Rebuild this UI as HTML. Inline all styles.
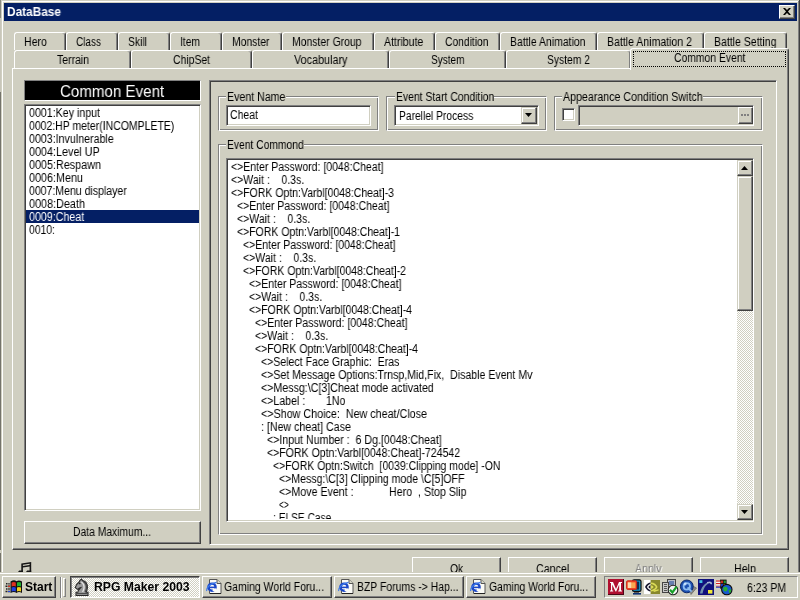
<!DOCTYPE html>
<html><head><meta charset="utf-8"><title>DataBase</title>
<style>
*{box-sizing:border-box;margin:0;padding:0}
html,body{width:800px;height:600px;overflow:hidden;background:#d0cfc1;font-family:"Liberation Sans",sans-serif;font-size:12px;color:#000}
.a{position:absolute}
.t{position:absolute;white-space:pre;transform-origin:0 0;will-change:transform}
svg{position:absolute;overflow:visible}
</style></head><body>
<div class="a" style="left:0px;top:0px;width:800px;height:600px;background:#d0cfc1"></div>
<div class="a" style="left:0px;top:0px;width:1px;height:18px;background:#8a8a80"></div>
<div class="a" style="left:0px;top:18px;width:1px;height:74px;background:#c8c6ba"></div>
<div class="a" style="left:0px;top:92px;width:1px;height:458px;background:#74736b"></div>
<div class="a" style="left:0px;top:553px;width:1px;height:19px;background:#74736b"></div>
<div class="a" style="left:2px;top:1px;width:796px;height:1px;background:#ffffff"></div>
<div class="a" style="left:2px;top:1px;width:1px;height:571px;background:#ffffff"></div>
<div class="a" style="left:798px;top:1px;width:1px;height:571px;background:#808080"></div>
<div class="a" style="left:799px;top:0px;width:1px;height:572px;background:#404040"></div>
<div class="a" style="left:4px;top:3px;width:793px;height:18px;background:#041f64"></div>
<span class="t" style="left:7px;top:4.84px;font-size:12px;line-height:14px;color:#fff;font-weight:bold;transform:scaleX(0.9871);">DataBase</span>
<div class="a" style="left:779px;top:5px;width:16px;height:14px;background:#d0cfc1;border:1px solid;border-color:#ffffff #404040 #404040 #ffffff;box-shadow:inset -1px -1px 0 #808080"></div>
<svg style="left:783px;top:8px" width="8" height="7" viewBox="0 0 8 7"><path d="M0 0h2l2 2 2-2h2L5 3.5 8 7H6L4 5 2 7H0l3-3.5z" fill="#000"/></svg>
<div class="a" style="left:14px;top:32px;width:52px;height:18px;background:#d0cfc1;border-radius:3px 3px 0 0;border:1px solid;border-color:#ffffff #404040 #d0cfc1 #ffffff;border-bottom:none;box-shadow:inset -1px 0 0 #808080"></div>
<span class="t" style="left:24.2px;top:34.84px;font-size:12px;line-height:14px;color:#000;transform:scaleX(0.8841);">Hero</span>
<div class="a" style="left:66px;top:32px;width:52px;height:18px;background:#d0cfc1;border-radius:3px 3px 0 0;border:1px solid;border-color:#ffffff #404040 #d0cfc1 #ffffff;border-bottom:none;box-shadow:inset -1px 0 0 #808080"></div>
<span class="t" style="left:76.2px;top:34.84px;font-size:12px;line-height:14px;color:#000;transform:scaleX(0.8329);">Class</span>
<div class="a" style="left:118px;top:32px;width:52px;height:18px;background:#d0cfc1;border-radius:3px 3px 0 0;border:1px solid;border-color:#ffffff #404040 #d0cfc1 #ffffff;border-bottom:none;box-shadow:inset -1px 0 0 #808080"></div>
<span class="t" style="left:128.2px;top:34.84px;font-size:12px;line-height:14px;color:#000;transform:scaleX(0.8630);">Skill</span>
<div class="a" style="left:170px;top:32px;width:52px;height:18px;background:#d0cfc1;border-radius:3px 3px 0 0;border:1px solid;border-color:#ffffff #404040 #d0cfc1 #ffffff;border-bottom:none;box-shadow:inset -1px 0 0 #808080"></div>
<span class="t" style="left:180.2px;top:34.84px;font-size:12px;line-height:14px;color:#000;transform:scaleX(0.8568);">Item</span>
<div class="a" style="left:222px;top:32px;width:60px;height:18px;background:#d0cfc1;border-radius:3px 3px 0 0;border:1px solid;border-color:#ffffff #404040 #d0cfc1 #ffffff;border-bottom:none;box-shadow:inset -1px 0 0 #808080"></div>
<span class="t" style="left:232.2px;top:34.84px;font-size:12px;line-height:14px;color:#000;transform:scaleX(0.8649);">Monster</span>
<div class="a" style="left:282px;top:32px;width:92px;height:18px;background:#d0cfc1;border-radius:3px 3px 0 0;border:1px solid;border-color:#ffffff #404040 #d0cfc1 #ffffff;border-bottom:none;box-shadow:inset -1px 0 0 #808080"></div>
<span class="t" style="left:292.2px;top:34.84px;font-size:12px;line-height:14px;color:#000;transform:scaleX(0.8682);">Monster Group</span>
<div class="a" style="left:374px;top:32px;width:61px;height:18px;background:#d0cfc1;border-radius:3px 3px 0 0;border:1px solid;border-color:#ffffff #404040 #d0cfc1 #ffffff;border-bottom:none;box-shadow:inset -1px 0 0 #808080"></div>
<span class="t" style="left:384.2px;top:34.84px;font-size:12px;line-height:14px;color:#000;transform:scaleX(0.8780);">Attribute</span>
<div class="a" style="left:435px;top:32px;width:65px;height:18px;background:#d0cfc1;border-radius:3px 3px 0 0;border:1px solid;border-color:#ffffff #404040 #d0cfc1 #ffffff;border-bottom:none;box-shadow:inset -1px 0 0 #808080"></div>
<span class="t" style="left:445.2px;top:34.84px;font-size:12px;line-height:14px;color:#000;transform:scaleX(0.8579);">Condition</span>
<div class="a" style="left:500px;top:32px;width:97px;height:18px;background:#d0cfc1;border-radius:3px 3px 0 0;border:1px solid;border-color:#ffffff #404040 #d0cfc1 #ffffff;border-bottom:none;box-shadow:inset -1px 0 0 #808080"></div>
<span class="t" style="left:510.2px;top:34.84px;font-size:12px;line-height:14px;color:#000;transform:scaleX(0.8706);">Battle Animation</span>
<div class="a" style="left:597px;top:32px;width:107px;height:18px;background:#d0cfc1;border-radius:3px 3px 0 0;border:1px solid;border-color:#ffffff #404040 #d0cfc1 #ffffff;border-bottom:none;box-shadow:inset -1px 0 0 #808080"></div>
<span class="t" style="left:607.2px;top:34.84px;font-size:12px;line-height:14px;color:#000;transform:scaleX(0.8787);">Battle Animation 2</span>
<div class="a" style="left:704px;top:32px;width:83px;height:18px;background:#d0cfc1;border-radius:3px 3px 0 0;border:1px solid;border-color:#ffffff #404040 #d0cfc1 #ffffff;border-bottom:none;box-shadow:inset -1px 0 0 #808080"></div>
<span class="t" style="left:714.2px;top:34.84px;font-size:12px;line-height:14px;color:#000;transform:scaleX(0.8755);">Battle Setting</span>
<div class="a" style="left:14px;top:50px;width:117px;height:18px;background:#d0cfc1;border-radius:3px 3px 0 0;border:1px solid;border-color:#ffffff #404040 #d0cfc1 #ffffff;border-bottom:none;box-shadow:inset -1px 0 0 #808080"></div>
<span class="t" style="left:56.5px;top:52.84px;font-size:12px;line-height:14px;color:#000;transform:scaleX(0.8722);">Terrain</span>
<div class="a" style="left:131px;top:50px;width:121px;height:18px;background:#d0cfc1;border-radius:3px 3px 0 0;border:1px solid;border-color:#ffffff #404040 #d0cfc1 #ffffff;border-bottom:none;box-shadow:inset -1px 0 0 #808080"></div>
<span class="t" style="left:173.0px;top:52.84px;font-size:12px;line-height:14px;color:#000;transform:scaleX(0.8664);">ChipSet</span>
<div class="a" style="left:252px;top:50px;width:137px;height:18px;background:#d0cfc1;border-radius:3px 3px 0 0;border:1px solid;border-color:#ffffff #404040 #d0cfc1 #ffffff;border-bottom:none;box-shadow:inset -1px 0 0 #808080"></div>
<span class="t" style="left:293.75px;top:52.84px;font-size:12px;line-height:14px;color:#000;transform:scaleX(0.9011);">Vocabulary</span>
<div class="a" style="left:389px;top:50px;width:117px;height:18px;background:#d0cfc1;border-radius:3px 3px 0 0;border:1px solid;border-color:#ffffff #404040 #d0cfc1 #ffffff;border-bottom:none;box-shadow:inset -1px 0 0 #808080"></div>
<span class="t" style="left:430.75px;top:52.84px;font-size:12px;line-height:14px;color:#000;transform:scaleX(0.8372);">System</span>
<div class="a" style="left:506px;top:50px;width:125px;height:18px;background:#d0cfc1;border-radius:3px 3px 0 0;border:1px solid;border-color:#ffffff #404040 #d0cfc1 #ffffff;border-bottom:none;box-shadow:inset -1px 0 0 #808080"></div>
<span class="t" style="left:547.0px;top:52.84px;font-size:12px;line-height:14px;color:#000;transform:scaleX(0.8597);">System 2</span>
<div class="a" style="left:12px;top:68px;width:777px;height:482px;background:#d0cfc1;border:1px solid;border-color:#ffffff #404040 #404040 #ffffff;box-shadow:inset -1px -1px 0 #808080"></div>
<div class="a" style="left:630px;top:48px;width:159px;height:22px;background:#d0cfc1;border-radius:3px 3px 0 0;border:1px solid;border-color:#ffffff #404040 #d0cfc1 #ffffff;border-bottom:none;box-shadow:inset -1px 0 0 #808080"></div>
<div class="a" style="left:633px;top:51px;width:153px;height:16px;border:1px dotted #000"></div>
<span class="t" style="left:673.75px;top:50.84px;font-size:12px;line-height:14px;color:#000;transform:scaleX(0.8645);">Common Event</span>
<div class="a" style="left:24px;top:80px;width:177px;height:21px;background:#000;border:1px solid;border-color:#808080 #fff #fff #808080"></div>
<span class="t" style="left:59.6px;top:81.76px;font-size:16px;line-height:19px;color:#fff;transform:scaleX(0.9450);">Common Event</span>
<div class="a" style="left:24px;top:104px;width:177px;height:407px;background:#fff;border:1px solid;border-color:#808080 #ffffff #ffffff #808080;box-shadow:inset 1px 1px 0 #404040, inset -1px -1px 0 #d0cfc1"></div>
<div class="a" style="left:26px;top:210px;width:173px;height:13px;background:#041f64"></div>
<span class="t" style="left:28.5px;top:105.84px;font-size:12px;line-height:14px;color:#000;transform:scaleX(0.8868);">0001:Key input</span>
<span class="t" style="left:28.5px;top:118.84px;font-size:12px;line-height:14px;color:#000;transform:scaleX(0.8724);">0002:HP meter(INCOMPLETE)</span>
<span class="t" style="left:28.5px;top:131.84px;font-size:12px;line-height:14px;color:#000;transform:scaleX(0.8882);">0003:Invulnerable</span>
<span class="t" style="left:28.5px;top:144.84px;font-size:12px;line-height:14px;color:#000;transform:scaleX(0.8986);">0004:Level UP</span>
<span class="t" style="left:28.5px;top:157.84px;font-size:12px;line-height:14px;color:#000;transform:scaleX(0.8993);">0005:Respawn</span>
<span class="t" style="left:28.5px;top:170.84px;font-size:12px;line-height:14px;color:#000;transform:scaleX(0.8993);">0006:Menu</span>
<span class="t" style="left:28.5px;top:183.84px;font-size:12px;line-height:14px;color:#000;transform:scaleX(0.8774);">0007:Menu displayer</span>
<span class="t" style="left:28.5px;top:196.84px;font-size:12px;line-height:14px;color:#000;transform:scaleX(0.9023);">0008:Death</span>
<span class="t" style="left:28.5px;top:209.84px;font-size:12px;line-height:14px;color:#fff;transform:scaleX(0.8902);">0009:Cheat</span>
<span class="t" style="left:28.5px;top:222.84px;font-size:12px;line-height:14px;color:#000;transform:scaleX(0.8658);">0010:</span>
<div class="a" style="left:24px;top:521px;width:177px;height:23px;background:#d0cfc1;border:1px solid;border-color:#ffffff #404040 #404040 #ffffff;box-shadow:inset -1px -1px 0 #808080"></div>
<span class="t" style="left:73.25px;top:525.34px;font-size:12px;line-height:14px;color:#000;transform:scaleX(0.8601);">Data Maximum...</span>
<div class="a" style="left:209px;top:80px;width:568px;height:465px;border:1px solid;border-color:#808080 #ffffff #ffffff #808080;box-shadow:inset 1px 1px 0 #404040, inset -1px -1px 0 #d0cfc1"></div>
<div class="a" style="left:218px;top:96px;width:161px;height:35px;border:1px solid;border-color:#808080 #ffffff #ffffff #808080;box-shadow:inset 1px 1px 0 #ffffff, inset -1px -1px 0 #808080"></div>
<div class="a" style="left:226px;top:91px;width:60.0px;height:12px;background:#d0cfc1"></div>
<span class="t" style="left:227px;top:89.84px;font-size:12px;line-height:14px;color:#000;transform:scaleX(0.8859);">Event Name</span>
<div class="a" style="left:226px;top:105px;width:145px;height:21px;background:#fff;border:1px solid;border-color:#808080 #ffffff #ffffff #808080;box-shadow:inset 1px 1px 0 #404040, inset -1px -1px 0 #d0cfc1"></div>
<span class="t" style="left:229.75px;top:107.84px;font-size:12px;line-height:14px;color:#000;transform:scaleX(0.8741);">Cheat</span>
<div class="a" style="left:386px;top:96px;width:161px;height:35px;border:1px solid;border-color:#808080 #ffffff #ffffff #808080;box-shadow:inset 1px 1px 0 #ffffff, inset -1px -1px 0 #808080"></div>
<div class="a" style="left:394.5px;top:91px;width:99.75px;height:12px;background:#d0cfc1"></div>
<span class="t" style="left:395.5px;top:89.84px;font-size:12px;line-height:14px;color:#000;transform:scaleX(0.8664);">Event Start Condition</span>
<div class="a" style="left:394px;top:105px;width:145px;height:21px;background:#fff;border:1px solid;border-color:#808080 #ffffff #ffffff #808080;box-shadow:inset 1px 1px 0 #404040, inset -1px -1px 0 #d0cfc1"></div>
<span class="t" style="left:398.75px;top:108.84px;font-size:12px;line-height:14px;color:#000;transform:scaleX(0.8564);">Parellel Process</span>
<div class="a" style="left:521px;top:107px;width:16px;height:17px;background:#d0cfc1;border:1px solid;border-color:#d0cfc1 #404040 #404040 #d0cfc1;box-shadow:inset -1px -1px 0 #808080, inset 1px 1px 0 #ffffff"></div>
<svg style="left:525px;top:113px" width="7" height="4" viewBox="0 0 7 4"><path d="M0 0h7L3.5 4z" fill="#000"/></svg>
<div class="a" style="left:554px;top:96px;width:209px;height:35px;border:1px solid;border-color:#808080 #ffffff #ffffff #808080;box-shadow:inset 1px 1px 0 #ffffff, inset -1px -1px 0 #808080"></div>
<div class="a" style="left:561.5px;top:91px;width:141.2px;height:12px;background:#d0cfc1"></div>
<span class="t" style="left:562.5px;top:89.84px;font-size:12px;line-height:14px;color:#000;transform:scaleX(0.8873);">Appearance Condition Switch</span>
<div class="a" style="left:562px;top:108px;width:13px;height:13px;background:#fff;border:1px solid;border-color:#808080 #ffffff #ffffff #808080;box-shadow:inset 1px 1px 0 #404040, inset -1px -1px 0 #d0cfc1"></div>
<div class="a" style="left:578px;top:105px;width:176px;height:21px;background:#d0cfc1;border:1px solid;border-color:#808080 #ffffff #ffffff #808080;box-shadow:inset 1px 1px 0 #404040, inset -1px -1px 0 #d0cfc1"></div>
<div class="a" style="left:738px;top:107px;width:15px;height:17px;background:#d0cfc1;border:1px solid;border-color:#ffffff #404040 #404040 #ffffff;box-shadow:inset -1px -1px 0 #808080"></div>
<svg style="left:741px;top:114px" width="8" height="2"><rect x="0" y="0" width="2" height="2" fill="#808080"/><rect x="3" y="0" width="2" height="2" fill="#808080"/><rect x="6" y="0" width="2" height="2" fill="#808080"/></svg>
<div class="a" style="left:218px;top:144px;width:545px;height:391px;border:1px solid;border-color:#808080 #ffffff #ffffff #808080;box-shadow:inset 1px 1px 0 #ffffff, inset -1px -1px 0 #808080"></div>
<div class="a" style="left:226px;top:139px;width:78.25px;height:12px;background:#d0cfc1"></div>
<span class="t" style="left:227px;top:137.84px;font-size:12px;line-height:14px;color:#000;transform:scaleX(0.8587);">Event Commond</span>
<div class="a" style="left:226px;top:158px;width:528px;height:364px;background:#fff;border:1px solid;border-color:#808080 #ffffff #ffffff #808080;box-shadow:inset 1px 1px 0 #404040, inset -1px -1px 0 #d0cfc1"></div>
<div class="a" style="left:737px;top:160px;width:16px;height:360px;background:#fff;background-image:conic-gradient(#d0cfc1 25%,#fff 0 50%,#d0cfc1 0 75%,#fff 0);background-size:2px 2px"></div>
<div class="a" style="left:737px;top:160px;width:16px;height:16px;background:#d0cfc1;border:1px solid;border-color:#d0cfc1 #404040 #404040 #d0cfc1;box-shadow:inset -1px -1px 0 #808080, inset 1px 1px 0 #ffffff"></div>
<svg style="left:741px;top:166px" width="7" height="4" viewBox="0 0 7 4"><path d="M0 4h7L3.5 0z" fill="#000"/></svg>
<div class="a" style="left:737px;top:176px;width:16px;height:135px;background:#d0cfc1;border:1px solid;border-color:#d0cfc1 #404040 #404040 #d0cfc1;box-shadow:inset -1px -1px 0 #808080, inset 1px 1px 0 #ffffff"></div>
<div class="a" style="left:737px;top:504px;width:16px;height:16px;background:#d0cfc1;border:1px solid;border-color:#d0cfc1 #404040 #404040 #d0cfc1;box-shadow:inset -1px -1px 0 #808080, inset 1px 1px 0 #ffffff"></div>
<svg style="left:741px;top:510px" width="7" height="4" viewBox="0 0 7 4"><path d="M0 0h7L3.5 4z" fill="#000"/></svg>
<div class="a" style="left:228px;top:160px;width:509px;height:359px;overflow:hidden">
<span class="t" style="left:3px;top:-0.16px;font-size:12px;line-height:14px;color:#000;transform:scaleX(0.8759);">&lt;&gt;Enter Password: [0048:Cheat]</span>
<span class="t" style="left:3px;top:12.84px;font-size:12px;line-height:14px;color:#000;transform:scaleX(0.8763);">&lt;&gt;Wait :    0.3s.</span>
<span class="t" style="left:3px;top:25.84px;font-size:12px;line-height:14px;color:#000;transform:scaleX(0.8738);">&lt;&gt;FORK Optn:Varbl[0048:Cheat]-3</span>
<span class="t" style="left:9px;top:38.84px;font-size:12px;line-height:14px;color:#000;transform:scaleX(0.8759);">&lt;&gt;Enter Password: [0048:Cheat]</span>
<span class="t" style="left:9px;top:51.84px;font-size:12px;line-height:14px;color:#000;transform:scaleX(0.8763);">&lt;&gt;Wait :    0.3s.</span>
<span class="t" style="left:9px;top:64.84px;font-size:12px;line-height:14px;color:#000;transform:scaleX(0.8738);">&lt;&gt;FORK Optn:Varbl[0048:Cheat]-1</span>
<span class="t" style="left:15px;top:77.84px;font-size:12px;line-height:14px;color:#000;transform:scaleX(0.8759);">&lt;&gt;Enter Password: [0048:Cheat]</span>
<span class="t" style="left:15px;top:90.84px;font-size:12px;line-height:14px;color:#000;transform:scaleX(0.8763);">&lt;&gt;Wait :    0.3s.</span>
<span class="t" style="left:15px;top:103.84px;font-size:12px;line-height:14px;color:#000;transform:scaleX(0.8738);">&lt;&gt;FORK Optn:Varbl[0048:Cheat]-2</span>
<span class="t" style="left:21px;top:116.84px;font-size:12px;line-height:14px;color:#000;transform:scaleX(0.8759);">&lt;&gt;Enter Password: [0048:Cheat]</span>
<span class="t" style="left:21px;top:129.84px;font-size:12px;line-height:14px;color:#000;transform:scaleX(0.8763);">&lt;&gt;Wait :    0.3s.</span>
<span class="t" style="left:21px;top:142.84px;font-size:12px;line-height:14px;color:#000;transform:scaleX(0.8738);">&lt;&gt;FORK Optn:Varbl[0048:Cheat]-4</span>
<span class="t" style="left:27px;top:155.84px;font-size:12px;line-height:14px;color:#000;transform:scaleX(0.8759);">&lt;&gt;Enter Password: [0048:Cheat]</span>
<span class="t" style="left:27px;top:168.84px;font-size:12px;line-height:14px;color:#000;transform:scaleX(0.8763);">&lt;&gt;Wait :    0.3s.</span>
<span class="t" style="left:27px;top:181.84px;font-size:12px;line-height:14px;color:#000;transform:scaleX(0.8738);">&lt;&gt;FORK Optn:Varbl[0048:Cheat]-4</span>
<span class="t" style="left:33px;top:194.84px;font-size:12px;line-height:14px;color:#000;transform:scaleX(0.8786);">&lt;&gt;Select Face Graphic:  Eras</span>
<span class="t" style="left:33px;top:207.84px;font-size:12px;line-height:14px;color:#000;transform:scaleX(0.8821);">&lt;&gt;Set Message Options:Trnsp,Mid,Fix,  Disable Event Mv</span>
<span class="t" style="left:33px;top:220.84px;font-size:12px;line-height:14px;color:#000;transform:scaleX(0.8871);">&lt;&gt;Messg:\C[3]Cheat mode activated</span>
<span class="t" style="left:33px;top:233.84px;font-size:12px;line-height:14px;color:#000;transform:scaleX(0.8846);">&lt;&gt;Label :       1No</span>
<span class="t" style="left:33px;top:246.84px;font-size:12px;line-height:14px;color:#000;transform:scaleX(0.8952);">&lt;&gt;Show Choice:  New cheat/Close</span>
<span class="t" style="left:33px;top:259.84px;font-size:12px;line-height:14px;color:#000;transform:scaleX(0.8867);">: [New cheat] Case</span>
<span class="t" style="left:39px;top:272.84px;font-size:12px;line-height:14px;color:#000;transform:scaleX(0.8852);">&lt;&gt;Input Number :  6 Dg.[0048:Cheat]</span>
<span class="t" style="left:39px;top:285.84px;font-size:12px;line-height:14px;color:#000;transform:scaleX(0.8780);">&lt;&gt;FORK Optn:Varbl[0048:Cheat]-724542</span>
<span class="t" style="left:45px;top:298.84px;font-size:12px;line-height:14px;color:#000;transform:scaleX(0.8723);">&lt;&gt;FORK Optn:Switch  [0039:Clipping mode] -ON</span>
<span class="t" style="left:51px;top:311.84px;font-size:12px;line-height:14px;color:#000;transform:scaleX(0.8797);">&lt;&gt;Messg:\C[3] Clipping mode \C[5]OFF</span>
<span class="t" style="left:51px;top:324.84px;font-size:12px;line-height:14px;color:#000;transform:scaleX(0.8868);">&lt;&gt;Move Event :            Hero  , Stop Slip</span>
<span class="t" style="left:51px;top:337.84px;font-size:12px;line-height:14px;color:#000;transform:scaleX(0.6992);">&lt;&gt;</span>
<span class="t" style="left:45px;top:350.84px;font-size:12px;line-height:14px;color:#000;transform:scaleX(0.8486);">: ELSE Case</span>
</div>
<div class="a" style="left:412px;top:557px;width:89px;height:23px;background:#d0cfc1;border:1px solid;border-color:#ffffff #404040 #404040 #ffffff;box-shadow:inset -1px -1px 0 #808080"></div>
<span class="t" style="left:449.88px;top:561.84px;font-size:12px;line-height:14px;color:#000;transform:scaleX(0.8635);">Ok</span>
<div class="a" style="left:508px;top:557px;width:89px;height:23px;background:#d0cfc1;border:1px solid;border-color:#ffffff #404040 #404040 #ffffff;box-shadow:inset -1px -1px 0 #808080"></div>
<span class="t" style="left:535.88px;top:561.84px;font-size:12px;line-height:14px;color:#000;transform:scaleX(0.8900);">Cancel</span>
<div class="a" style="left:604px;top:557px;width:89px;height:23px;background:#d0cfc1;border:1px solid;border-color:#ffffff #404040 #404040 #ffffff;box-shadow:inset -1px -1px 0 #808080"></div>
<span class="t" style="left:636.25px;top:562.84px;font-size:12px;line-height:14px;color:#ffffff;transform:scaleX(0.8824);">Apply</span>
<span class="t" style="left:635.25px;top:561.84px;font-size:12px;line-height:14px;color:#808080;transform:scaleX(0.8824);">Apply</span>
<div class="a" style="left:700px;top:557px;width:89px;height:23px;background:#d0cfc1;border:1px solid;border-color:#ffffff #404040 #404040 #ffffff;box-shadow:inset -1px -1px 0 #808080"></div>
<span class="t" style="left:733.5px;top:561.84px;font-size:12px;line-height:14px;color:#000;transform:scaleX(0.8911);">Help</span>
<svg style="left:18px;top:562px" width="14" height="10" viewBox="0 0 14 10"><path d="M3.3 1.5L13.2 0V10h-1.6V4.4L4.9 5.4V10H3.3z M4.9 2.7v1.2l6.7-1V1.7z" fill="#151515" fill-rule="evenodd"/><path d="M0 10L1.2 8.4H4.9V10z M8 10L9.2 8.4H13.2V10z" fill="#151515"/></svg>
<div class="a" style="left:0px;top:572px;width:800px;height:28px;background:#d0cfc1"></div>
<div class="a" style="left:0px;top:573px;width:800px;height:1px;background:#ffffff"></div>
<div class="a" style="left:2px;top:576px;width:54px;height:22px;background:#d0cfc1;border:1px solid;border-color:#ffffff #404040 #404040 #ffffff;box-shadow:inset -1px -1px 0 #808080"></div>
<span class="t" style="left:24.5px;top:580.34px;font-size:12px;line-height:14px;color:#000;font-weight:bold;transform:scaleX(0.9874);">Start</span>
<div class="a" style="left:60px;top:577px;width:1px;height:21px;background:#808080"></div>
<div class="a" style="left:61px;top:577px;width:1px;height:21px;background:#ffffff"></div>
<div class="a" style="left:63px;top:578px;width:3px;height:19px;background:#d0cfc1;border:1px solid;border-color:#ffffff #808080 #808080 #ffffff"></div>
<div class="a" style="left:70px;top:576px;width:130px;height:22px;background:#fff;background-image:conic-gradient(#d0cfc1 25%,#fff 0 50%,#d0cfc1 0 75%,#fff 0);background-size:2px 2px;border:1px solid;border-color:#404040 #ffffff #ffffff #404040;box-shadow:inset 1px 1px 0 #808080"></div>
<span class="t" style="left:93.5px;top:580.34px;font-size:12px;line-height:14px;color:#000;font-weight:bold;transform:scaleX(1.0153);">RPG Maker 2003</span>
<div class="a" style="left:202px;top:576px;width:130px;height:22px;background:#d0cfc1;border:1px solid;border-color:#ffffff #404040 #404040 #ffffff;box-shadow:inset -1px -1px 0 #808080"></div>
<span class="t" style="left:224px;top:580.34px;font-size:12px;line-height:14px;color:#000;transform:scaleX(0.8735);">Gaming World Foru...</span>
<div class="a" style="left:334px;top:576px;width:130px;height:22px;background:#d0cfc1;border:1px solid;border-color:#ffffff #404040 #404040 #ffffff;box-shadow:inset -1px -1px 0 #808080"></div>
<span class="t" style="left:356.7px;top:580.34px;font-size:12px;line-height:14px;color:#000;transform:scaleX(0.8689);">BZP Forums -&gt; Hap...</span>
<div class="a" style="left:466px;top:576px;width:130px;height:22px;background:#d0cfc1;border:1px solid;border-color:#ffffff #404040 #404040 #ffffff;box-shadow:inset -1px -1px 0 #808080"></div>
<span class="t" style="left:488.75px;top:580.34px;font-size:12px;line-height:14px;color:#000;transform:scaleX(0.8647);">Gaming World Foru...</span>
<div class="a" style="left:604px;top:576px;width:194px;height:22px;border:1px solid;border-color:#808080 #ffffff #ffffff #808080"></div>
<span class="t" style="left:746.7px;top:581.34px;font-size:12px;line-height:14px;color:#000;transform:scaleX(0.8724);">6:23 PM</span>
<svg style="left:5px;top:580px" width="18" height="15" viewBox="0 0 18 15"><path d="M5.5 1.5C8 0 10 0 11.5 1.2C13 0.2 15 0.2 17 1.5V13C15 11.8 13 11.8 11.5 13C10 11.8 8 11.8 5.5 13z" fill="#111"/><path d="M6.6 2.6C8.2 1.8 9.6 1.8 10.8 2.6V6.4C9.6 5.7 8.2 5.7 6.6 6.4z" fill="#e03020"/><path d="M12 2.6C13.2 1.8 14.6 1.8 16 2.6V6.4C14.6 5.7 13.2 5.7 12 6.4z" fill="#20b030"/><path d="M6.6 7.6C8.2 6.9 9.6 6.9 10.8 7.6V11.4C9.6 10.7 8.2 10.7 6.6 11.4z" fill="#2040e0"/><path d="M12 7.6C13.2 6.9 14.6 6.9 16 7.6V11.4C14.6 10.7 13.2 10.7 12 11.4z" fill="#f0d020"/><path d="M1 3h1.5v1.5H1zM3.2 3.2h1.6v1.4H3.2z M0.5 5.6h2v1.4h-2z M3 5.6h2v1.6H3z M1 8.2h1.5v1.5H1zM3.2 8.2h1.6v1.6H3.2z M0.5 10.8h2v1.4h-2z M3 10.8h2v1.4H3z" fill="#222"/><path d="M3 5.8h2v1.2H3z" fill="#e03020"/><path d="M3 10.9h2v1.2H3z" fill="#2040e0"/></svg>
<svg style="left:74px;top:579px" width="15" height="17" viewBox="0 0 15 17"><path d="M6 1.2L7.6 0L8.4 1.6C11.2 2 13.4 4.6 13.4 8.6C13.4 10.6 12.6 12 12.2 13.2H14V16.5H2V13.2H3.8C4 11.5 5.5 10 6.8 8.6C5.5 8.8 4.6 9.6 3.6 10.4L1.2 8.6C1.6 6.5 3.6 4.2 5.2 3z" fill="#9a9a9a" stroke="#2a2a2a" stroke-width="1.1"/><path d="M9 2.4C11.6 3.6 12.6 6 12.4 9C12.3 10.6 11.6 12 11.2 13" fill="none" stroke="#444" stroke-width="1.3"/><path d="M7.4 3C9.4 4.4 10.2 6.4 10 9C9.8 10.6 9 12 8.6 13" fill="none" stroke="#e4e4e4" stroke-width="1.3"/><path d="M2.5 14.6H13.5" stroke="#444" stroke-width="1"/><circle cx="5.8" cy="4.6" r="0.8" fill="#111"/></svg>
<svg style="left:206px;top:579px" width="16" height="16" viewBox="0 0 16 16"><path d="M3.5 0.5H11L15 4.5V14.5H3.5z" fill="#fbfbf6" stroke="#555" stroke-width="1"/><path d="M11 0.5V4.5H15" fill="#d8d8c8" stroke="#555" stroke-width="1"/><path d="M4 14.5H15" stroke="#222" stroke-width="1"/><circle cx="6" cy="8.2" r="3.6" fill="none" stroke="#1c48c8" stroke-width="2.4"/><path d="M3 8.4H9.6" stroke="#1c48c8" stroke-width="1.6"/><path d="M6.6 9.4H10.4V12H6.6z" fill="#fbfbf6"/><path d="M0.6 12C0 9 4 4.5 10.5 3.4" fill="none" stroke="#3a78e8" stroke-width="1.3"/></svg>
<svg style="left:338px;top:579px" width="16" height="16" viewBox="0 0 16 16"><path d="M3.5 0.5H11L15 4.5V14.5H3.5z" fill="#fbfbf6" stroke="#555" stroke-width="1"/><path d="M11 0.5V4.5H15" fill="#d8d8c8" stroke="#555" stroke-width="1"/><path d="M4 14.5H15" stroke="#222" stroke-width="1"/><circle cx="6" cy="8.2" r="3.6" fill="none" stroke="#1c48c8" stroke-width="2.4"/><path d="M3 8.4H9.6" stroke="#1c48c8" stroke-width="1.6"/><path d="M6.6 9.4H10.4V12H6.6z" fill="#fbfbf6"/><path d="M0.6 12C0 9 4 4.5 10.5 3.4" fill="none" stroke="#3a78e8" stroke-width="1.3"/></svg>
<svg style="left:470px;top:579px" width="16" height="16" viewBox="0 0 16 16"><path d="M3.5 0.5H11L15 4.5V14.5H3.5z" fill="#fbfbf6" stroke="#555" stroke-width="1"/><path d="M11 0.5V4.5H15" fill="#d8d8c8" stroke="#555" stroke-width="1"/><path d="M4 14.5H15" stroke="#222" stroke-width="1"/><circle cx="6" cy="8.2" r="3.6" fill="none" stroke="#1c48c8" stroke-width="2.4"/><path d="M3 8.4H9.6" stroke="#1c48c8" stroke-width="1.6"/><path d="M6.6 9.4H10.4V12H6.6z" fill="#fbfbf6"/><path d="M0.6 12C0 9 4 4.5 10.5 3.4" fill="none" stroke="#3a78e8" stroke-width="1.3"/></svg>
<svg style="left:608px;top:579px" width="16" height="16" viewBox="0 0 16 16"><rect width="16" height="16" fill="#4a0614"/><rect width="15" height="15" fill="#b01030"/><path d="M2 3H5L8 10L11 3H14V4H13V11.6H14V12.6H10.2V11.6H11.2V5.6L8.2 12.6H7.5L4.2 5.6V11.6H5.2V12.6H2V11.6H3V4H2z" fill="#fff"/></svg>
<svg style="left:626px;top:579px" width="16" height="17" viewBox="0 0 16 17"><rect x="6.5" y="0.8" width="8.5" height="11.6" rx="1.6" fill="#18a0d8" stroke="#0a0a0a" stroke-width="1.2"/><rect x="8.4" y="2.6" width="4.8" height="8" fill="#0a2c50"/><rect x="0.6" y="1.8" width="10" height="8.6" rx="1" fill="#f04828" stroke="#d02818" stroke-width="1"/><rect x="1.8" y="3.4" width="7.6" height="5.6" fill="#f8a850"/><rect x="1.8" y="3.4" width="3.4" height="5.6" fill="#fcd8b0"/><path d="M8 12.6h5v1H8z" fill="#111"/><path d="M7 14h8v1.6H7z" fill="#103070"/></svg>
<svg style="left:644px;top:580px" width="16" height="14" viewBox="0 0 16 14"><rect width="16" height="14" fill="#88882c"/><rect width="6.6" height="14" fill="#fff"/><path d="M1 7C2.6 3.6 5.4 2.6 6.6 2.6V4C5.2 4.2 3.8 5.2 3 7C3.8 8.8 5.2 9.8 6.6 10V11.4C5 11.4 2.6 10.4 1 7z" fill="#181830"/><path d="M4.4 7C5 5.8 5.8 5.4 6.6 5.2V8.8C5.8 8.6 5 8.2 4.4 7z" fill="#181830"/><path d="M6.6 2.6C10 2.4 12.4 4.6 13.6 7C12.4 9.4 10 11.6 6.6 11.4V10C9 10 10.8 8.6 11.8 7C10.8 5.4 9 4 6.6 4z" fill="#dcdc58"/><path d="M6.6 5.2C8 5.2 9 6 9.6 7C9 8 8 8.8 6.6 8.8z" fill="#dcdc58"/><path d="M9 10.6L14.6 9.2V10.6L10 12z" fill="#dcdc58"/></svg>
<svg style="left:662px;top:578px" width="17" height="18" viewBox="0 0 17 18"><rect x="5.5" y="1.5" width="8" height="9" fill="#b8bcc8" stroke="#444" stroke-width="1"/><rect x="7" y="3" width="5" height="4" fill="#6880b0"/><rect x="0.5" y="4.5" width="6" height="10" fill="#c8c8c8" stroke="#444" stroke-width="1"/><path d="M2 6.5h3M2 8.5h3M2 10.5h3M2 12.5h3" stroke="#555" stroke-width="1"/><circle cx="11" cy="12" r="4.8" fill="#f4f4f4" stroke="#222" stroke-width="1.1"/><path d="M8 11.8L10.4 14.4L14.6 8.6" fill="none" stroke="#18a028" stroke-width="2.2"/></svg>
<svg style="left:680px;top:579px" width="17" height="17" viewBox="0 0 17 17"><path d="M9 5L16.5 9L11 15.5z" fill="#8a8a8a" stroke="#555" stroke-width=".6"/><circle cx="6.8" cy="7.4" r="6.4" fill="#1c50b0" stroke="#0c2868" stroke-width="1"/><circle cx="6.8" cy="7.4" r="3.2" fill="none" stroke="#8cbcf0" stroke-width="1.8"/><path d="M7.6 8.4L11.6 12.6" stroke="#8cbcf0" stroke-width="1.8"/><circle cx="5.2" cy="5" r="1.4" fill="#d0e8ff" opacity=".85"/></svg>
<svg style="left:698px;top:579px" width="16" height="16" viewBox="0 0 16 16"><rect width="16" height="16" fill="#10107c"/><path d="M2 14.5C3 9 6 4 12 2.6C13.6 2.6 14.4 3.8 14 5.4L12.4 5C12.4 4.2 12 4 11.4 4.2C7.5 5.4 5.4 9.6 4.6 14.5z" fill="#7090b0"/><path d="M9 3.6C11 3 13 3.2 13.4 5" fill="none" stroke="#a8b4d8" stroke-width="1.2"/><rect x="10" y="11" width="4.4" height="3.6" fill="#f0e838"/><rect x="1.4" y="1.2" width="3" height="2.8" fill="#40c0e0"/></svg>
<svg style="left:716px;top:579px" width="17" height="17" viewBox="0 0 17 17"><path d="M4 0.6h6.6v9H4z" fill="#111"/><path d="M0 1.6h4.4v1.2H0z M0 4h4.4v1.2H0z M0 6.4h4.4v1.2H0z" fill="#d82020"/><path d="M0 2.8h4.4v1.2H0z M0 5.2h4.4v1.2H0z" fill="#f4f4f4"/><path d="M0 7.6h4.4v1.2H0z" fill="#2838c0"/><path d="M5 1.6h2.2v2.6H5z" fill="#c83020"/><path d="M7.8 1.6h2v2.6H7.8z" fill="#20a030"/><path d="M5 5h2.2v2.6H5z" fill="#2038c0"/><path d="M7.8 5h2v2.6H7.8z" fill="#e8d020"/><circle cx="10.8" cy="10.6" r="5.2" fill="#1858d0" stroke="#0a0a0a" stroke-width="1.1"/><path d="M7.4 8.6C9 7 11 7.6 11.6 9.4C12 11 10.6 12.6 9 12.4C7.6 12.2 6.8 10.4 7.4 8.6z M12.6 11.4l2.4-1.4l0.2 2.6l-1.8 1.8z" fill="#28b030"/></svg>
</body></html>
